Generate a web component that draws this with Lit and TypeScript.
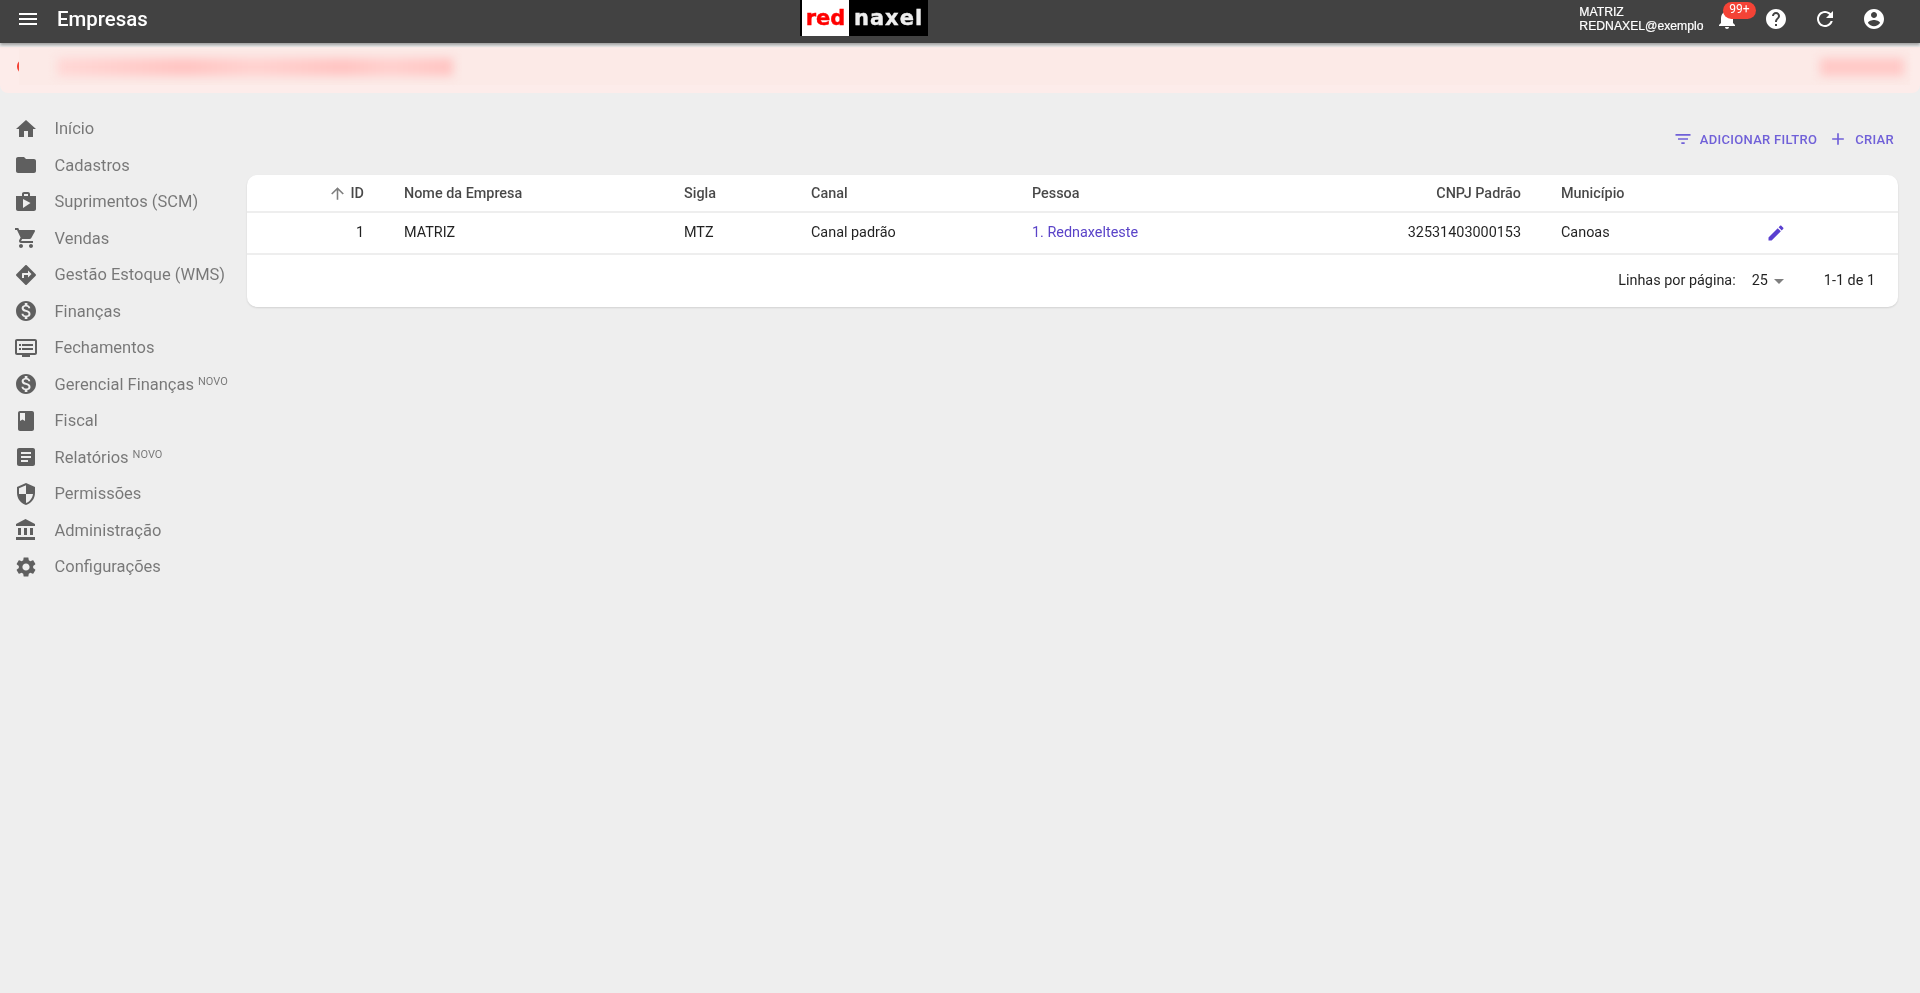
import { LitElement, css, html, svg } from "lit";
import { customElement } from "lit/decorators.js";

const icons: Record<string, string> = {
  menu: "M3 18h18v-2H3v2zm0-5h18v-2H3v2zm0-7v2h18V6H3z",
  bell: "M12 22c1.1 0 2-.9 2-2h-4c0 1.1.9 2 2 2zm6-6v-5c0-3.07-1.63-5.64-4.5-6.32V4c0-.83-.67-1.5-1.5-1.5s-1.5.67-1.5 1.5v.68C7.64 5.36 6 7.92 6 11v5l-2 2v1h16v-1l-2-2z",
  help: "M12 2C6.48 2 2 6.48 2 12s4.48 10 10 10 10-4.48 10-10S17.52 2 12 2zm1 17h-2v-2h2v2zm2.07-7.75l-.9.92C13.45 12.9 13 13.5 13 15h-2v-.5c0-1.1.45-2.1 1.17-2.83l1.24-1.26c.37-.36.59-.86.59-1.41 0-1.1-.9-2-2-2s-2 .9-2 2H8c0-2.21 1.79-4 4-4s4 1.79 4 4c0 .88-.36 1.68-.93 2.25z",
  refresh: "M17.65 6.35C16.2 4.9 14.21 4 12 4c-4.42 0-7.99 3.58-7.99 8s3.57 8 7.99 8c3.73 0 6.84-2.55 7.73-6h-2.08c-.82 2.33-3.04 4-5.65 4-3.31 0-6-2.69-6-6s2.69-6 6-6c1.66 0 3.14.69 4.22 1.78L13 11h7V4l-2.35 2.35z",
  account: "M12 2C6.48 2 2 6.48 2 12s4.48 10 10 10 10-4.48 10-10S17.52 2 12 2zm0 3c1.66 0 3 1.34 3 3s-1.34 3-3 3-3-1.34-3-3 1.34-3 3-3zm0 14.2c-2.5 0-4.71-1.28-6-3.22.03-1.99 4-3.08 6-3.08 1.99 0 5.97 1.09 6 3.08-1.29 1.94-3.5 3.22-6 3.22z",
  home: "M10 20v-6h4v6h5v-8h3L12 3 2 12h3v8z",
  folder: "M10 4H4c-1.1 0-1.99.9-1.99 2L2 18c0 1.1.9 2 2 2h16c1.1 0 2-.9 2-2V8c0-1.1-.9-2-2-2h-8l-2-2z",
  shop: "M16 6V4c0-1.11-.89-2-2-2h-4c-1.11 0-2 .89-2 2v2H2v13c0 1.11.89 2 2 2h16c1.11 0 2-.89 2-2V6h-6zm-6-2h4v2h-4V4zM9 18V9l7.5 4L9 18z",
  cart: "M7 18c-1.1 0-1.99.9-1.99 2S5.9 22 7 22s2-.9 2-2-.9-2-2-2zM1 2v2h2l3.6 7.59-1.35 2.45c-.16.28-.25.61-.25.96 0 1.1.9 2 2 2h12v-2H7.42c-.14 0-.25-.11-.25-.25l.03-.12.9-1.63h7.45c.75 0 1.41-.41 1.75-1.03l3.58-6.49c.08-.14.12-.31.12-.48 0-.55-.45-1-1-1H5.21l-.94-2H1zm16 16c-1.1 0-1.99.9-1.99 2s.89 2 1.99 2 2-.9 2-2-.9-2-2-2z",
  directions: "M21.71 11.29l-9-9c-.39-.39-1.02-.39-1.41 0l-9 9c-.39.39-.39 1.02 0 1.41l9 9c.39.39 1.02.39 1.41 0l9-9c.39-.38.39-1.01 0-1.41zM14 14.5V12h-4v3H8v-4c0-.55.45-1 1-1h5V7.5l3.5 3.5-3.5 3.5z",
  money: "M12 2C6.48 2 2 6.48 2 12s4.48 10 10 10 10-4.48 10-10S17.52 2 12 2zm1.41 16.09V20h-2.67v-1.93c-1.71-.36-3.16-1.46-3.27-3.4h1.96c.1 1.05.82 1.87 2.65 1.87 1.96 0 2.4-.98 2.4-1.59 0-.83-.44-1.61-2.67-2.14-2.48-.6-4.18-1.62-4.18-3.67 0-1.72 1.39-2.84 3.11-3.21V4h2.67v1.95c1.86.45 2.79 1.86 2.85 3.39H14.3c-.05-1.11-.64-1.87-2.22-1.87-1.5 0-2.4.68-2.4 1.64 0 .84.65 1.39 2.67 1.91s4.18 1.39 4.18 3.91c-.01 1.83-1.38 2.83-3.12 3.16z",
  closing: "M21 3H3c-1.11 0-2 .89-2 2v12c0 1.1.89 2 2 2h5v2h8v-2h5c1.1 0 1.99-.9 1.99-2L23 5c0-1.11-.9-2-2-2zm0 14H3V5h18v12zm-2-9H8v2h11V8zm0 4H8v2h11v-2zM7 8H5v2h2V8zm0 4H5v2h2v-2z",
  book: "M18 2H6c-1.1 0-2 .9-2 2v16c0 1.1.9 2 2 2h12c1.1 0 2-.9 2-2V4c0-1.1-.9-2-2-2zM6 4h5v8l-2.5-1.5L6 12V4z",
  report: "M19 3H5c-1.1 0-2 .9-2 2v14c0 1.1.9 2 2 2h14c1.1 0 2-.9 2-2V5c0-1.1-.9-2-2-2zm-5 14H7v-2h7v2zm3-4H7v-2h10v2zm0-4H7V7h10v2z",
  shield: "M12 1L3 5v6c0 5.55 3.84 10.74 9 12 5.16-1.26 9-6.45 9-12V5l-9-4zm0 10.99h7c-.53 4.12-3.28 7.79-7 8.94V12H5V6.3l7-3.11v8.8z",
  bank: "M4 10v7h3v-7H4zm6 0v7h3v-7h-3zM2 22h19v-3H2v3zm14-12v7h3v-7h-3zm-4.5-9L2 6v2h19V6l-9.5-5z",
  gear: "M19.14 12.94c.04-.3.06-.61.06-.94 0-.32-.02-.64-.07-.94l2.03-1.58c.18-.14.23-.41.12-.61l-1.92-3.32c-.12-.22-.37-.29-.59-.22l-2.39.96c-.5-.38-1.03-.7-1.62-.94l-.36-2.54c-.04-.24-.24-.41-.48-.41h-3.84c-.24 0-.43.17-.47.41l-.36 2.54c-.59.24-1.13.57-1.62.94l-2.39-.96c-.22-.08-.47 0-.59.22L2.74 8.87c-.12.21-.08.47.12.61l2.03 1.58c-.05.3-.09.63-.09.94s.02.64.07.94l-2.03 1.58c-.18.14-.23.41-.12.61l1.92 3.32c.12.22.37.29.59.22l2.39-.96c.5.38 1.03.7 1.62.94l.36 2.54c.05.24.24.41.48.41h3.84c.24 0 .44-.17.47-.41l.36-2.54c.59-.24 1.13-.56 1.62-.94l2.39.96c.22.08.47 0 .59-.22l1.92-3.32c.12-.22.07-.47-.12-.61l-2.01-1.58zM12 15.6c-1.98 0-3.6-1.62-3.6-3.6s1.62-3.6 3.6-3.6 3.6 1.62 3.6 3.6-1.62 3.6-3.6 3.6z",
  filter: "M10 18h4v-2h-4v2zM3 6v2h18V6H3zm3 7h12v-2H6v2z",
  plus: "M19 13h-6v6h-2v-6H5v-2h6V5h2v6h6v2z",
  up: "M4 12l1.41 1.41L11 7.83V20h2V7.83l5.58 5.59L20 12l-8-8-8 8z",
  edit: "M3 17.25V21h3.75L17.81 9.94l-3.75-3.75L3 17.25zM20.71 7.04c.39-.39.39-1.02 0-1.41l-2.34-2.34c-.39-.39-1.02-.39-1.41 0l-1.83 1.83 3.75 3.75 1.83-1.83z",
  caret: "M7 10l5 5 5-5z",
};

const icon = (name: string) =>
  html`<svg class="icon" viewBox="0 0 24 24" fill="currentColor">${svg`<path d=${icons[name]}></path>`}</svg>`;

const menu = [
  { label: "Início", icon: "home" },
  { label: "Cadastros", icon: "folder" },
  { label: "Suprimentos (SCM)", icon: "shop" },
  { label: "Vendas", icon: "cart" },
  { label: "Gestão Estoque (WMS)", icon: "directions" },
  { label: "Finanças", icon: "money" },
  { label: "Fechamentos", icon: "closing" },
  { label: "Gerencial Finanças", icon: "money", novo: true },
  { label: "Fiscal", icon: "book" },
  { label: "Relatórios", icon: "report", novo: true },
  { label: "Permissões", icon: "shield" },
  { label: "Administração", icon: "bank" },
  { label: "Configurações", icon: "gear" },
];

@customElement("app-root")
export class AppRoot extends LitElement {
  static styles = css`
    :host {
      display: block;
      min-height: 993px;
      background: #eeeeee;
      font-family: Roboto, "Liberation Sans", sans-serif;
      color: rgba(0, 0, 0, 0.87);
      filter: blur(0.5px);
    }
    .icon {
      display: block;
      width: 24px;
      height: 24px;
      flex: none;
    }

    .topbar {
      position: relative;
      z-index: 2;
      height: 43px;
      background: #424242;
      color: #fff;
      display: grid;
      grid-template-columns: 800px 128px 1fr;
      box-shadow: 0 2px 3px rgba(0, 0, 0, 0.35);
    }
    .left {
      display: flex;
      align-items: center;
      padding-left: 16px;
      padding-bottom: 5px;
    }
    .title {
      margin-left: 17px;
      font-size: 20.4px;
      font-weight: 500;
    }
    .logo {
      height: 36px;
      background: #000;
      display: flex;
      font-family: "DejaVu Sans", sans-serif;
      font-weight: 700;
      font-size: 21px;
      line-height: 36px;
      -webkit-text-stroke: 0.4px;
    }
    .logo .red {
      width: 47px;
      margin-left: 2px;
      background: #fff;
      color: #f00;
      text-align: center;
      margin-right: 5px;
    }
    .logo .naxel {
      color: #eee;
      letter-spacing: 1px;
    }
    .right {
      display: flex;
      align-items: center;
      justify-content: flex-end;
      padding-right: 34px;
    }
    .user {
      font-family: "Liberation Sans", Arial, sans-serif;
      font-size: 12.2px;
      line-height: 14.5px;
      margin-right: 11.5px;
      margin-top: -5px;
      -webkit-text-stroke: 0.2px;
    }
    .tools {
      display: flex;
      gap: 25px;
      margin-top: -5px;
    }
    .bell {
      position: relative;
    }
    .badge {
      position: absolute;
      top: -5px;
      left: 8px;
      width: 33px;
      height: 17px;
      border-radius: 9px;
      background: #f44336;
      font-size: 12px;
      line-height: 15px;
      text-align: center;
    }

    .alert {
      margin-top: 4px;
      height: 44px;
      background: #fdecea;
      border-radius: 0 0 8px 8px;
      padding: 2px 10px 0 19px;
      position: relative;
    }
    .alert::before {
      content: "";
      position: absolute;
      left: 17px;
      top: 13px;
      width: 6px;
      height: 13px;
      border-radius: 6px 0 0 6px;
      background: #f44336;
    }
    .veil {
      position: relative;
      height: 36px;
      background: #fceae7;
      display: flex;
      justify-content: space-between;
      align-items: center;
      padding: 0 6px 0 38px;
    }
    .smear {
      height: 18px;
      filter: blur(5px);
    }
    .smear.long {
      width: 396px;
      background: linear-gradient(90deg, #ffd8d6, #ffc4c2 32%, #ffd2d0 50%, #ffc4c2 72%, #ffd0ce 84%, #ffc4c2);
    }
    .smear.short {
      width: 84px;
      background: #ffc9c7;
    }

    .body {
      display: flex;
    }
    nav {
      width: 247px;
      flex: none;
      padding-top: 17.5px;
      box-sizing: border-box;
    }
    .item {
      height: 36.5px;
      display: flex;
      align-items: center;
      padding-left: 14px;
      color: rgba(0, 0, 0, 0.5);
      font-size: 16.5px;
    }
    .item .icon {
      margin-right: 16.5px;
      color: rgba(0, 0, 0, 0.6);
    }
    .item sup {
      font-size: 11px;
      line-height: 1;
      margin-left: 4px;
      align-self: flex-start;
      margin-top: 10px;
    }

    main {
      flex: 1;
      padding-right: 22px;
    }
    .actions {
      height: 81.5px;
      display: flex;
      justify-content: flex-end;
      align-items: center;
      padding-top: 10.5px;
      box-sizing: border-box;
      color: #7060d8;
      font-size: 13px;
      font-weight: 500;
      letter-spacing: 0.3px;
    }
    .action {
      display: flex;
      align-items: center;
      margin-left: 10px;
      margin-right: 1px;
    }
    .action:last-child {
      margin-right: 4px;
    }
    .action .icon {
      width: 20px;
      height: 20px;
      margin-right: 7px;
    }

    .card {
      background: #fff;
      border-radius: 10px;
      box-shadow: 0 1px 2px rgba(0, 0, 0, 0.12);
      overflow: hidden;
    }
    table {
      width: 100%;
      border-collapse: collapse;
      table-layout: fixed;
      font-size: 14.4px;
    }
    col.c1 { width: 141px; }
    col.c2 { width: 280px; }
    col.c3 { width: 127px; }
    col.c4 { width: 221px; }
    col.c5 { width: 200px; }
    col.c6 { width: 329px; }
    col.c7 { width: 185px; }
    th,
    td {
      padding: 0 24px 0 16px;
      text-align: left;
      border-bottom: 2px solid #eeeeee;
      font-weight: 400;
    }
    th {
      height: 37.5px;
      padding-top: 1px;
      box-sizing: border-box;
      font-weight: 500;
      color: rgba(0, 0, 0, 0.72);
    }
    td {
      height: 39.5px;
    }
    .num {
      text-align: right;
    }
    .sort {
      display: inline-flex;
      align-items: center;
      vertical-align: middle;
      gap: 4px;
    }
    .sort .icon {
      width: 19px;
      height: 19px;
      color: rgba(0, 0, 0, 0.5);
    }
    a {
      color: #5a43c8;
      text-decoration: none;
    }
    .edit {
      color: #5a3fd0;
      padding-left: 36px;
    }
    .edit .icon {
      width: 20px;
      height: 20px;
    }
    .pager {
      height: 52px;
      display: flex;
      justify-content: flex-end;
      align-items: center;
      font-size: 14.4px;
      padding-right: 23px;
    }
    .rows {
      margin-left: 16px;
      display: flex;
      align-items: center;
    }
    .rows .icon {
      color: rgba(0, 0, 0, 0.5);
      margin-left: -1px;
    }
    .range {
      margin-left: 33px;
    }
  `;

  render() {
    return html`
      <header class="topbar">
        <div class="left">${icon("menu")}<span class="title">Empresas</span></div>
        <div class="logo"><span class="red">red</span><span class="naxel">naxel</span></div>
        <div class="right">
          <div class="user">MATRIZ<br />REDNAXEL@exemplo</div>
          <div class="tools">
            <div class="bell">${icon("bell")}<span class="badge">99+</span></div>
            ${icon("help")} ${icon("refresh")} ${icon("account")}
          </div>
        </div>
      </header>
      <div class="alert">
        <div class="veil"><div class="smear long"></div><div class="smear short"></div></div>
      </div>
      <div class="body">
        <nav>
          ${menu.map(
            (m) => html`<div class="item">
              ${icon(m.icon)}<span>${m.label}</span>${m.novo ? html`<sup>NOVO</sup>` : ""}
            </div>`
          )}
        </nav>
        <main>
          <div class="actions">
            <div class="action">${icon("filter")}ADICIONAR FILTRO</div>
            <div class="action">${icon("plus")}CRIAR</div>
          </div>
          <div class="card">
            <table>
              <colgroup>
                <col class="c1" /><col class="c2" /><col class="c3" /><col class="c4" />
                <col class="c5" /><col class="c6" /><col class="c7" /><col />
              </colgroup>
              <thead>
                <tr>
                  <th class="num"><span class="sort">${icon("up")}ID</span></th>
                  <th>Nome da Empresa</th>
                  <th>Sigla</th>
                  <th>Canal</th>
                  <th>Pessoa</th>
                  <th class="num">CNPJ Padrão</th>
                  <th>Município</th>
                  <th></th>
                </tr>
              </thead>
              <tbody>
                <tr>
                  <td class="num">1</td>
                  <td>MATRIZ</td>
                  <td>MTZ</td>
                  <td>Canal padrão</td>
                  <td><a href="#">1. Rednaxelteste</a></td>
                  <td class="num">32531403000153</td>
                  <td>Canoas</td>
                  <td class="edit">${icon("edit")}</td>
                </tr>
              </tbody>
            </table>
            <div class="pager">
              <span>Linhas por página:</span>
              <span class="rows">25 ${icon("caret")}</span>
              <span class="range">1-1 de 1</span>
            </div>
          </div>
        </main>
      </div>
    `;
  }
}

declare global {
  interface HTMLElementTagNameMap {
    "app-root": AppRoot;
  }
}
